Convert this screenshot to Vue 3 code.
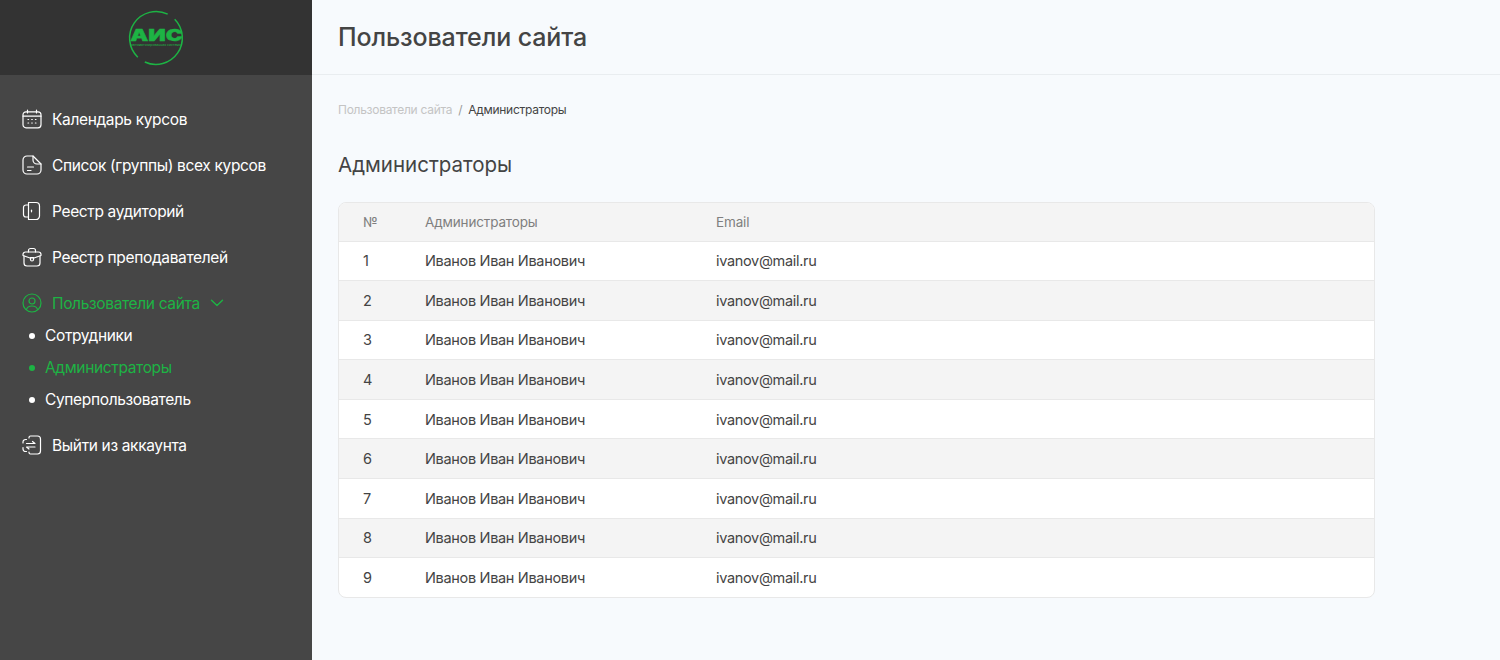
<template>
  <div class="layout">
    <aside class="sidebar">
      <div class="logo">
        <div class="logo-mark">
          <svg class="logo-ring" width="58" height="58" viewBox="0 0 58 58" fill="none" stroke="#1db344" stroke-width="1.5">
            <path d="M40.7 5.2A26.5 26.5 0 0 0 10.8 48.2" />
            <path d="M17.8 53A26.5 26.5 0 0 0 47.7 10.3" />
          </svg>
          <span class="logo-text">АИС</span>
          <span class="logo-sub">автоматизированная система</span>
        </div>
      </div>
      <nav class="menu">
        <a v-for="item in topItems" :key="item.title" class="menu-item">
          <svg class="menu-icon" width="20" height="20" viewBox="0 0 20 20" fill="none" stroke="currentColor" stroke-width="1.2" stroke-linecap="round" stroke-linejoin="round">
            <path v-for="(d, i) in item.icon" :key="i" :d="d" />
          </svg>
          <span>{{ item.title }}</span>
        </a>
        <a class="menu-item green">
          <svg class="menu-icon" width="20" height="20" viewBox="0 0 20 20" fill="none" stroke="currentColor" stroke-width="1.2" stroke-linecap="round" stroke-linejoin="round">
            <circle cx="10" cy="10" r="9" />
            <circle cx="10" cy="8" r="3" />
            <path d="M4.5 16.5c.6-2.4 2.6-3.5 5.5-3.5s4.9 1.1 5.5 3.5" />
          </svg>
          <span>Пользователи сайта</span>
          <svg class="chevron" width="14" height="8" viewBox="0 0 14 8" fill="none" stroke="currentColor" stroke-width="1.4" stroke-linecap="round" stroke-linejoin="round">
            <path d="M1.5 1.2 7 6.5l5.5-5.3" />
          </svg>
        </a>
        <ul class="submenu">
          <li v-for="sub in subItems" :key="sub" :class="{ green: sub === 'Администраторы' }">{{ sub }}</li>
        </ul>
        <a class="menu-item">
          <svg class="menu-icon" width="20" height="20" viewBox="0 0 20 20" fill="none" stroke="currentColor" stroke-width="1.2" stroke-linecap="round" stroke-linejoin="round">
            <path v-for="(d, i) in exitIcon" :key="i" :d="d" />
          </svg>
          <span>Выйти из аккаунта</span>
        </a>
      </nav>
    </aside>
    <main class="content">
      <header class="topbar">
        <h1>Пользователи сайта</h1>
      </header>
      <div class="page">
        <div class="crumbs">
          <span class="crumb-link">Пользователи сайта</span>
          <span class="crumb-sep">/</span>
          <span class="crumb-current">Администраторы</span>
        </div>
        <h2>Администраторы</h2>
        <div class="table-box">
          <div class="row head">
            <div>№</div>
            <div>Администраторы</div>
            <div>Email</div>
          </div>
          <div v-for="row in rows" :key="row.id" class="row">
            <div>{{ row.id }}</div>
            <div>{{ row.name }}</div>
            <div>{{ row.email }}</div>
          </div>
        </div>
      </div>
    </main>
  </div>
</template>

<script setup>
const topItems = [
  {
    title: 'Календарь курсов',
    icon: [
      'M4 2.8h12a3 3 0 0 1 3 3v10a3 3 0 0 1-3 3H4a3 3 0 0 1-3-3v-10a3 3 0 0 1 3-3Z',
      'M1 7.2h18',
      'M5.5 1v3M14.5 1v3',
      'M6 10.5h.6M9.7 10.5h.6M13.4 10.5h.6M6 14h.6M9.7 14h.6M13.4 14h.6'
    ]
  },
  {
    title: 'Список (группы) всех курсов',
    icon: [
      'M11 1H5a4 4 0 0 0-4 4v10a4 4 0 0 0 4 4h10a4 4 0 0 0 4-4V9Z',
      'M11 1v4a4 4 0 0 0 4 4h4',
      'M5.5 12h6M5.5 15.5h3.5'
    ]
  },
  {
    title: 'Реестр аудиторий',
    icon: [
      'M6.5 4H4A2.5 2.5 0 0 0 1.5 6.5v7A2.5 2.5 0 0 0 4 16h2.5',
      'M6.5 1.5H14A3.5 3.5 0 0 1 17.5 5v10a3.5 3.5 0 0 1-3.5 3.5H6.5Z',
      'M9.5 9.2v1.6'
    ]
  },
  {
    title: 'Реестр преподавателей',
    icon: [
      'M6.5 5V3.5a2 2 0 0 1 2-2h3a2 2 0 0 1 2 2V5',
      'M3.5 5h13A2.5 2.5 0 0 1 19 7.5v1L12 11H8L1 8.5v-1A2.5 2.5 0 0 1 3.5 5Z',
      'M2 9v7a3 3 0 0 0 3 3h10a3 3 0 0 0 3-3V9',
      'M8.5 10.5h3v2a1.5 1.5 0 0 1-3 0Z'
    ]
  }
]

const exitIcon = [
  'M7 3V2.5A1.5 1.5 0 0 1 8.5 1h7a3 3 0 0 1 3 3v12a3 3 0 0 1-3 3h-7A1.5 1.5 0 0 1 7 17.5V17',
  'M4.5 4.5h-1A2.5 2.5 0 0 0 1 7v1M1 12.5V14a2.5 2.5 0 0 0 2.5 2.5h1',
  'M4.5 8.5H13l-2.5-2',
  'M13 12H4.5l2.5 2'
]

const subItems = ['Сотрудники', 'Администраторы', 'Суперпользователь']

const rows = [1, 2, 3, 4, 5, 6, 7, 8, 9].map((id) => ({
  id,
  name: 'Иванов Иван Иванович',
  email: 'ivanov@mail.ru'
}))
</script>

<style>
html, body {
  margin: 0;
  background: #f7fafd;
}
</style>

<style scoped>
.layout {
  display: flex;
  min-height: 660px;
  font-family: Inter, "Liberation Sans", sans-serif;
  color: #444;
}

.sidebar {
  width: 312px;
  flex-shrink: 0;
  background: #464646;
  color: #fff;
}

.logo {
  height: 75px;
  background: #333333;
  display: flex;
  align-items: center;
  justify-content: center;
}

.logo-mark {
  position: relative;
  width: 58px;
  height: 58px;
  display: flex;
  flex-direction: column;
  align-items: center;
  justify-content: center;
}

.logo-ring {
  position: absolute;
  left: 0;
  top: 0;
}

.logo-text {
  font-size: 16px;
  line-height: 15px;
  font-weight: 900;
  transform: scaleX(1.42);
  -webkit-text-stroke: 0.4px #1db344;
  color: #1db344;
}

.logo-sub {
  font-size: 3.4px;
  line-height: 4px;
  white-space: nowrap;
  color: #1db344;
}

.menu {
  display: flex;
  flex-direction: column;
  padding: 21px 0 0 22px;
}

.menu-item {
  height: 46px;
  display: flex;
  align-items: center;
  font-size: 15.5px;
  letter-spacing: -0.35px;
  color: #fff;
}

.menu-icon {
  margin-right: 10px;
  flex-shrink: 0;
}

.menu-item.green {
  color: #1db344;
}

.chevron {
  margin-left: 10px;
}

.submenu {
  list-style: none;
  margin: -7px 0 7px;
  padding: 0 0 0 7px;
}

.submenu li {
  height: 32px;
  font-size: 15.5px;
  letter-spacing: -0.35px;
  display: flex;
  align-items: center;
  gap: 10px;
  color: #fff;
}

.submenu li.green {
  color: #1db344;
}

.submenu li::before {
  content: '';
  width: 6px;
  height: 6px;
  border-radius: 50%;
  margin-top: 1px;
  background: currentColor;
}

.content {
  flex: 1;
  min-width: 0;
}

.topbar {
  height: 74px;
  border-bottom: 1px solid #e9edf0;
  display: flex;
  align-items: center;
  padding-left: 26px;
}

.topbar h1 {
  margin: 0;
  font-size: 25px;
  letter-spacing: -0.12px;
  font-weight: 500;
  color: #444;
}

.page {
  padding: 27px 125px 0 26px;
}

.crumbs {
  font-size: 12px;
  line-height: 16px;
  letter-spacing: -0.28px;
  display: flex;
  gap: 6px;
}

.crumb-link {
  color: #c4c4c4;
}

.crumb-sep {
  color: #9a9a9a;
}

.crumb-current {
  color: #444;
}

h2 {
  margin: 33px 0 22.5px;
  font-size: 20.5px;
  line-height: 28px;
  font-weight: 400;
  color: #444;
}

.table-box {
  border: 1px solid #e8e8e8;
  border-radius: 8px;
  overflow: hidden;
  background: #fff;
}

.row {
  display: grid;
  grid-template-columns: 62px 291px 1fr;
  height: 39.6px;
  align-items: center;
  font-size: 14.5px;
  letter-spacing: -0.32px;
  color: #444;
  border-top: 1px solid #e8e8e8;
  box-sizing: border-box;
  padding-left: 24px;
}

.row:nth-child(odd) {
  background: #f4f4f4;
}

.row.head {
  border-top: 0;
  height: 38px;
  font-size: 13.5px;
  letter-spacing: -0.15px;
  color: #7f7f7f;
}
</style>
